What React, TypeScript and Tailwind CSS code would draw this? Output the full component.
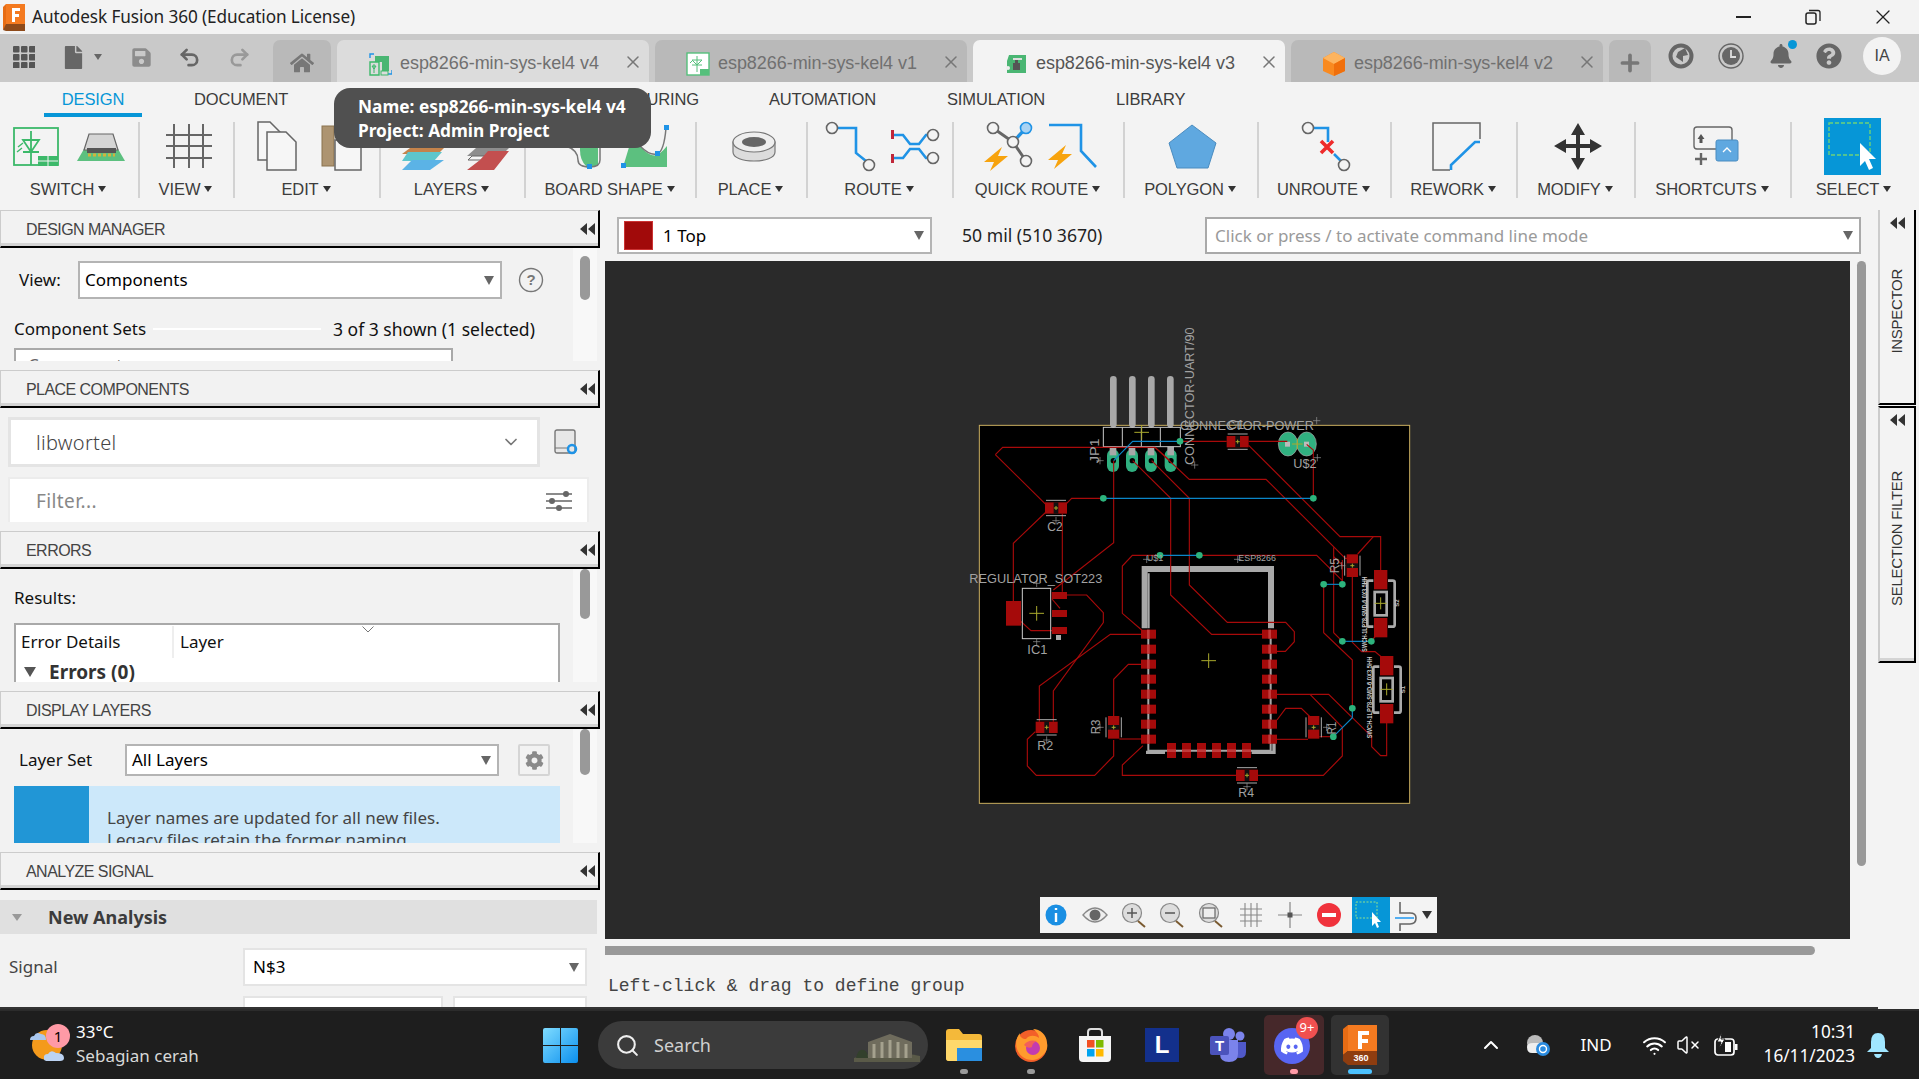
import React from "react";
import { FaDiscord, FaCog, FaHome, FaBell, FaQuestionCircle, FaSave, FaFile } from "react-icons/fa";
import { Undo2, Redo2, Wifi, VolumeX, ChevronUp, ChevronDown, Search, X, Plus } from "lucide-react";

const Caret = ({ c = "border-t-[#333]" }: { c?: string }) => (
  <span className={`inline-block w-0 h-0 ml-[4px] border-l-[4px] border-r-[4px] border-t-[6px] border-l-transparent border-r-transparent ${c}`} />
);
const SelCaret = () => (
  <span className="inline-block w-0 h-0 border-l-[5px] border-r-[5px] border-t-[9px] border-l-transparent border-r-transparent border-t-[#666]" />
);
const Rewind = () => (
  <svg width="15" height="12" viewBox="0 0 15 12"><path d="M7 0v12L0 6zM15 0v12L8 6z" fill="#333" /></svg>
);

const Thumb = ({ h }: { h: string }) => (
  <div className="w-[24px] shrink-0 bg-[#f8f8f8] pl-[7px]">
    <div className={`w-[10px] rounded-[5px] bg-[#999] ${h}`} />
  </div>
);

const PanelHeader = ({ title }: { title: string }) => (
  <div className="h-[38px] shrink-0 w-[600px] flex items-center justify-between bg-[#f2f2f2] border-t border-t-[#ccc] border-l border-l-[#ccc] border-r-2 border-r-black border-b-2 border-b-black shadow-[inset_0_-3px_0_#d4d4d4] pl-[25px] pr-[3px] font-['Liberation_Sans',sans-serif]">
    <span className="text-[16px] tracking-[-0.55px] text-[#444] pt-[2px]">{title}</span>
    <Rewind />
  </div>
);

function Group({ left, w, label, children, sep = true }: { left: number; w: number; label: string; children?: React.ReactNode; sep?: boolean }) {
  return (
    <div className="shrink-0 h-[128px] relative" style={{ width: w }}>
      <svg width={w} height={60} viewBox={`${left} 118 ${w} 60`} className="block mt-[36px]">{children}</svg>
      <div className="h-[20px] mt-[1px] pr-[4px] flex items-center justify-center text-[16.500px] leading-none text-[#3c3c3c] tracking-[-0.1px]">
        {label}<Caret />
      </div>
      {sep && <div className="absolute right-0 top-[40px] h-[76px] w-[2px] bg-[#d2d2d2]" />}
    </div>
  );
}

const Bolt = ({ x, y }: { x: number; y: number }) => (
  <path transform={`translate(${x},${y})`} d="M6 -12 L-12 3 L-2 3 L-6 12 L12 -3 L2 -3 Z" fill="#f7a30d" />
);
const Ring = ({ x, y, r = 5.5, fill = "#f3f3f3", s = "#666" }: { x: number; y: number; r?: number; fill?: string; s?: string }) => (
  <circle cx={x} cy={y} r={r} fill={fill} stroke={s} strokeWidth={1.6} />
);
const Doc = ({ x, y, w, h }: { x: number; y: number; w: number; h: number }) => (
  <path d={`M${x} ${y}H${x + w - 10}L${x + w} ${y + 10}V${y + h}H${x}Z`} fill="#f6f6f6" stroke="#666" strokeWidth={1.5} />
);

function Ribbon() {
  return (
    <div className="flex w-[1919px] h-[128px] shrink-0 bg-[#f3f3f3] overflow-hidden">
      <Group left={0} w={140} label="SWITCH">
        <rect x={14} y={128} width={44} height={37} fill="none" stroke="#3cb96a" strokeWidth={1.8} />
        <path d="M31 131V165M23 140H39L31 152ZM23 152H39" fill="none" stroke="#3cb96a" strokeWidth={1.8} />
        <path d="M18 147l5 -4M17 152l5 -4" stroke="#3cb96a" strokeWidth={1.4} />
        <rect x={38} y={156} width={20} height={10} fill="#3cb96a" />
        <path d="M38 161H58M48 156V166" stroke="#f3f3f3" strokeWidth={1} />
        <path d="M77 161L84 149H118L125 161Z" fill="#5cc07f" />
        <path d="M84 150L89 134H113L118 150Z" fill="#d5d5d5" stroke="#666" strokeWidth={1.2} />
        <rect x={87} y={148} width={29} height={5} fill="#555" />
        <path d="M88 155h27" stroke="#d3b23c" strokeWidth={3} strokeDasharray="3 2" />
      </Group>
      <Group left={140} w={95} label="VIEW">
        <path d="M174 124V168M189 124V168M203 124V168M166 135H212M166 146H212M166 158H212" stroke="#666" strokeWidth={2} fill="none" />
      </Group>
      <Group left={235} w={146} label="EDIT">
        <Doc x={258} y={122} w={22} h={38} />
        <Doc x={267} y={132} w={29} h={38} />
        <rect x={322} y={126} width={12} height={40} fill="#ad9471" stroke="#8a734f" />
        <rect x={335} y={140} width={26} height={30} fill="#f6f6f6" stroke="#666" strokeWidth={1.5} />
      </Group>
      <Group left={381} w={145} label="LAYERS">
        <path d="M410 148H444L438 154H402Z" fill="#c4834b" />
        <path d="M408 152H442L434 161H402Z" fill="#5dc6cc" />
        <path d="M412 160H444L430 170H402Z" fill="#5bb3e6" />
        <path d="M476 148H509L501 156H467Z" fill="#8d8d8d" />
        <path d="M472 156H504L498 160H468Z" fill="#f3f3f3" stroke="#666" />
        <path d="M488 151H509L494 170H467L480 160Z" fill="#c34f4f" />
      </Group>
      <Group left={526} w={171} label="BOARD SHAPE">
        <path d="M580 146H598V166H586Q580 160 580 150Z" fill="#5cc07f" />
        <path d="M566 146Q578 150 578 160Q578 167 590 167" fill="none" stroke="#777" strokeWidth={1.5} />
        <path d="M600 146V160Q600 167 590 167" fill="none" stroke="#777" strokeWidth={1.5} />
        <rect x={587} y={164} width={5} height={5} fill="#1f93e6" />
        <path d="M623 167L630 144L640 146Q650 158 658 155Q664 150 667 146V167Z" fill="#5cc07f" />
        <path d="M666 128Q664 152 657 154Q650 156 640 146" fill="none" stroke="#777" strokeWidth={1.5} />
        <rect x={664} y={125} width={5} height={5} fill="#1f93e6" />
        <rect x={655} y={151} width={5} height={5} fill="#1f93e6" />
        <rect x={621} y={163} width={5} height={5} fill="#1f93e6" />
      </Group>
      <Group left={697} w={111} label="PLACE">
        <path d="M733 142V152C733 158 743 161 754 161S775 158 775 152V142Z" fill="#dcdcdc" stroke="#777" strokeWidth={1.2} />
        <ellipse cx={754} cy={142} rx={21} ry={10} fill="#eee" stroke="#777" strokeWidth={1.2} />
        <ellipse cx={754} cy={142} rx={12} ry={5} fill="#666" />
      </Group>
      <Group left={808} w={146} label="ROUTE">
        <path d="M837 128H856V153L866 161" fill="none" stroke="#1f93e6" strokeWidth={2.6} />
        <Ring x={832} y={128} /><Ring x={869} y={165} />
        <path d="M894 135H903L910 144H919L926 135H932M894 158H903L910 149H919L926 158H932" fill="none" stroke="#1f93e6" strokeWidth={2.6} />
        <path d="M892.500 130V139M892.500 154V163" stroke="#c0273a" strokeWidth={3} />
        <Ring x={933} y={135} /><Ring x={933} y={158} />
      </Group>
      <Group left={954} w={171} label="QUICK ROUTE">
        <path d="M993 128L1013 142L1026 161M1013 142L1026 128" stroke="#666" strokeWidth={3} fill="none" />
        <path d="M1013 142L1026 128" stroke="#1f93e6" strokeWidth={3} fill="none" />
        <Ring x={993} y={128} /><Ring x={1013} y={142} /><Ring x={1026} y={161} />
        <Ring x={1026} y={128} fill="#a9d3f3" s="#1f93e6" />
        <Bolt x={996} y={159} />
        <path d="M1049 125H1081V151L1096 167" fill="none" stroke="#1f93e6" strokeWidth={2.6} />
        <Bolt x={1060} y={157} />
      </Group>
      <Group left={1125} w={134} label="POLYGON">
        <path d="M1192 125L1216 143L1208 168H1177L1169 143Z" fill="#5fa8e0" stroke="#4a8cc0" strokeWidth={1} />
      </Group>
      <Group left={1259} w={133} label="UNROUTE">
        <path d="M1314 128H1328V142M1334 154L1341 161" fill="none" stroke="#1f93e6" strokeWidth={2.6} />
        <Ring x={1308} y={128} /><Ring x={1344} y={165} />
        <path d="M1321 141L1333 153M1333 141L1321 153" stroke="#ee2b2b" strokeWidth={3.6} />
      </Group>
      <Group left={1392} w={126} label="REWORK">
        <path d="M1450 170H1433V123H1480V139" fill="none" stroke="#666" strokeWidth={1.5} />
        <path d="M1451 170V165L1475 142H1480" fill="none" stroke="#1f93e6" strokeWidth={2.6} />
      </Group>
      <Group left={1518} w={118} label="MODIFY">
        <path d="M1578 123L1585 135H1580V144H1590V139L1602 146L1590 153V148H1580V158H1585L1578 170L1571 158H1576V148H1566V153L1554 146L1566 139V144H1576V135H1571Z" fill="#333" />
      </Group>
      <Group left={1636} w={156} label="SHORTCUTS">
        <path d="M1718 149H1697Q1694 149 1694 146V130Q1694 127 1697 127H1729Q1732 127 1732 130V140" fill="none" stroke="#666" strokeWidth={1.4} />
        <path d="M1701 134l3.500 5h-2v4h-3v-4h-2z" fill="#555" />
        <path d="M1695 159H1707M1701 153V165" stroke="#666" strokeWidth={2.4} />
        <rect x={1716} y={140} width={22} height={21} rx={2} fill="#5fa8e0" stroke="#4a8cc0" />
        <path d="M1723 152l4 -4l4 4" fill="none" stroke="#fff" strokeWidth={1.3} />
      </Group>
      <Group left={1792} w={127} label="SELECT" sep={false}>
        <rect x={1824} y={118} width={57} height={57} fill="#0696d7" />
        <rect x={1829} y={123} width={41} height={32} fill="none" stroke="#6fd27a" strokeWidth={1.4} strokeDasharray="4 2" />
        <path d="M1860 143V166L1865 161L1869 170L1873 168L1869 159L1876 159Z" fill="#fff" />
      </Group>
    </div>
  );
}

function TabIcon({ k }: { k: number }) {
  if (k === 0)
    return (
      <svg width="24" height="24" viewBox="0 0 24 24">
        <path d="M2 6V2H6M20 22H24V18" stroke="#1f93e6" strokeWidth="1.4" fill="none" />
        <path d="M7 4H21V19H14V10H7Z" fill="#4ab673" />
        <path d="M2 10H11V23H2Z" fill="none" stroke="#3cb96a" strokeWidth="1.4" />
        <path d="M6 12V21M4 14H8L6 17Z" stroke="#3cb96a" fill="none" />
        <rect x="13" y="19" width="7" height="4" fill="none" stroke="#3cb96a" />
      </svg>
    );
  if (k === 1)
    return (
      <svg width="24" height="24" viewBox="0 0 24 24">
        <rect x="1" y="1" width="22" height="22" fill="#fff" stroke="#56c07c" strokeWidth="1.4" />
        <path d="M11 4V20M6 8H16L11 13ZM6 13H16M4 11l3 -3" stroke="#56c07c" fill="none" />
        <rect x="14" y="17" width="9" height="6" fill="#56c07c" />
      </svg>
    );
  if (k === 2)
    return (
      <svg width="24" height="24" viewBox="0 0 24 24">
        <path d="M5 3H22V21H3V9Z" fill="#4ab673" />
        <rect x="9" y="11" width="7" height="7" fill="#555" />
        <rect x="9" y="6" width="9" height="2" fill="#ddd" />
        <rect x="11" y="8" width="3" height="3" fill="#555" />
        <circle cx="4" cy="16" r="2" fill="#eee" />
      </svg>
    );
  return (
    <svg width="24" height="26" viewBox="0 0 24 26">
      <path d="M12 1L23 7V20L12 25L1 20V7Z" fill="#f98a20" />
      <path d="M1 7L12 13L23 7L12 1Z" fill="#fdb45f" />
      <path d="M12 13V25L23 20V7Z" fill="#f06f0c" />
    </svg>
  );
}

function Tab({ k, label, bg }: { k: number; label: string; bg: string }) {
  const active = k === 2;
  return (
    <div className={`w-[312px] h-[42px] mr-[6px] rounded-t-[7px] ${bg} flex items-center pl-[31px] pt-[5px] shrink-0 text-[18px] tracking-[-0.05px] ${active ? "text-[#555]" : "text-[#707070]"}`}>
      <div className="w-[24px] flex justify-center"><TabIcon k={k} /></div>
      <span className="ml-[8px] w-[224px] whitespace-nowrap">{label}</span>
      <X size={20} strokeWidth={1.8} className="text-[#777] ml-[-1px] mt-[-3px]" />
    </div>
  );
}

function Title() {
  return (
    <div className="h-[34px] w-[1919px] shrink-0 bg-[#f3f3f3] flex items-center">
      <svg width="22" height="27" viewBox="0 0 22 27" className="ml-[3px]">
        <path d="M3 0H22V22H3Z" fill="#f47a20" />
        <path d="M0 3L3 0V22L0 26Z" fill="#e76c14" />
        <path d="M3 20H22V27H3L0 26Z" fill="#8e4a1a" />
        <path d="M9 4H17V7H12V10H16V13H12V18H9Z" fill="#fff" />
      </svg>
      <span className="ml-[7px] text-[17.200px] font-['Noto_Sans',sans-serif] text-[#222] tracking-[-0.1px]">Autodesk Fusion 360 (Education License)</span>
      <div className="flex-1" />
      <div className="w-[15px] h-[1.500px] bg-[#222] mr-[54px]" />
      <svg width="16" height="16" viewBox="0 0 16 16" className="mr-[50px]">
        <rect x="1" y="4" width="10" height="11" rx="2" fill="none" stroke="#222" strokeWidth="1.5" />
        <path d="M4 1.500H13Q15 1.500 15 3.500V12" fill="none" stroke="#222" strokeWidth="1.3" />
      </svg>
      <X size={24} strokeWidth={1.3} className="text-[#222] mr-[24px]" />
    </div>
  );
}

function TabBar() {
  return (
    <div className="h-[48px] w-[1919px] shrink-0 bg-[#c9c9c9] flex items-end">
      <div className="h-[48px] w-[273px] shrink-0 flex items-center pb-[2px]">
        <svg width="22" height="22" viewBox="0 0 22 22" className="ml-[13px]">
          {[0, 8, 16].map((x) => [0, 8, 16].map((y) => <rect key={`${x}${y}`} x={x} y={y} width="6.500" height="6.500" rx="1" fill="#555" />))}
        </svg>
        <FaFile size={23} className="ml-[27px] text-[#666]" />
        <span className="ml-[5px] flex"><Caret c="border-t-[#666]" /></span>
        <FaSave size={21} className="ml-[29px] text-[#8c8c8c]" />
        <Undo2 size={23} strokeWidth={2.8} className="ml-[26px] text-[#666]" />
        <Redo2 size={23} strokeWidth={2.8} className="ml-[27px] text-[#999]" />
      </div>
      <div className="w-[58px] h-[42px] mr-[6px] rounded-t-[7px] bg-[#b9b9b9] flex items-center justify-center shrink-0">
        <FaHome size={24} className="text-[#777] mt-[4px]" />
      </div>
      <Tab k={0} label="esp8266-min-sys-kel4 v4" bg="bg-[#dcdcdc]" />
      <Tab k={1} label="esp8266-min-sys-kel4 v1" bg="bg-[#b9b9b9]" />
      <Tab k={2} label="esp8266-min-sys-kel4 v3" bg="bg-[#f3f3f3]" />
      <Tab k={3} label="esp8266-min-sys-kel4 v2" bg="bg-[#b9b9b9]" />
      <div className="w-[42px] h-[42px] rounded-t-[7px] bg-[#b9b9b9] flex items-center justify-center shrink-0 pt-[3px]">
        <Plus size={26} strokeWidth={3.4} className="text-[#777]" />
      </div>
      <div className="h-[48px] flex items-center pb-[4px] shrink-0">
        <svg width="26" height="26" viewBox="0 0 26 26" className="ml-[17px]">
          <circle cx="13" cy="13" r="10.500" fill="none" stroke="#666" strokeWidth="4" />
          <path d="M10 9L17 5L20 12L15 13L15 19L8 14Z" fill="#666" />
        </svg>
        <svg width="26" height="26" viewBox="0 0 26 26" className="ml-[24px]">
          <circle cx="13" cy="13" r="12" fill="none" stroke="#666" strokeWidth="1.4" />
          <circle cx="13" cy="13" r="9" fill="#666" />
          <path d="M13 7V14H18" stroke="#ddd" strokeWidth="1.800" fill="none" />
        </svg>
        <div className="relative ml-[24px] w-[26px] h-[26px] flex items-center justify-center">
          <FaBell size={24} className="text-[#666]" />
          <div className="absolute right-[-3px] top-[-3px] w-[9px] h-[9px] rounded-full bg-[#0696d7]" />
        </div>
        <FaQuestionCircle size={26} className="ml-[22px] text-[#666]" />
        <div className="ml-[21px] w-[38px] h-[38px] rounded-full bg-[#f3f3f3] flex items-center justify-center text-[16px] text-[#444]">IA</div>
      </div>
    </div>
  );
}

function NavTabs() {
  const item = "shrink-0 text-[16.500px] tracking-[-0.15px] text-[#3c3c3c] pt-[5px]";
  return (
    <div className="absolute left-0 top-[82px] h-[36px] w-[1300px] flex z-10">
      <div className="ml-[44px] w-[98px] h-[35px] border-b-4 border-b-[#0696d7] text-center text-[16.500px] tracking-[-0.15px] text-[#0696d7] pt-[5px] shrink-0">DESIGN</div>
      <div className={`${item} ml-[52px] w-[363px]`}>DOCUMENT</div>
      <div className={`${item} w-[212px]`}>MANUFACTURING</div>
      <div className={`${item} w-[178px]`}>AUTOMATION</div>
      <div className={`${item} w-[169px]`}>SIMULATION</div>
      <div className={`${item} w-[100px]`}>LIBRARY</div>
    </div>
  );
}

function Select({ w, h, label, sw }: { w: string; h: string; label: string; sw?: boolean }) {
  return (
    <div className={`${w} ${h} shrink-0 bg-white border-2 border-[#b4b4b4] flex items-center pr-[6px]`}>
      {sw && <div className="w-[29px] h-[29px] ml-[5px] mr-[10px] bg-[#a10a0a] border border-[#c33]" />}
      <span className={`${sw ? "" : "ml-[5px]"} text-[17px] text-black flex-1 whitespace-nowrap`}>{label}</span>
      <SelCaret />
    </div>
  );
}

function LeftPanel() {
  return (
    <div className="w-[600px] shrink-0 flex flex-col bg-[#f2f2f2] font-['Noto_Sans',sans-serif] text-[17px] overflow-hidden border-b-2 border-b-[#333]">
      <PanelHeader title="DESIGN MANAGER" />
      <div className="h-[113px] flex overflow-hidden shrink-0">
        <div className="w-[573px]">
          <div className="flex items-center mt-[13px]">
            <span className="ml-[19px] w-[59px] text-[#111]">View:</span>
            <Select w="w-[424px]" h="h-[38px]" label="Components" />
            <svg width="26" height="26" viewBox="0 0 26 26" className="ml-[16px]">
              <circle cx="13" cy="13" r="11.500" fill="none" stroke="#777" strokeWidth="1.4" />
              <text x="13" y="18" textAnchor="middle" fontSize="15" fontWeight="700" fill="#777" fontFamily="Liberation Sans">?</text>
            </svg>
          </div>
          <div className="flex items-center h-[24px] mt-[18px] ml-[14px] text-[#111]">
            <span className="w-[139px] whitespace-nowrap">Component Sets</span>
            <div className="w-[168px] h-[2px] bg-white" />
            <span className="ml-[12px] whitespace-nowrap text-[17.500px]">3 of 3 shown (1 selected)</span>
          </div>
          <div className="ml-[14px] mt-[7px] w-[439px] h-[40px] border-2 border-[#a9a9a9] bg-white pl-[12px] pt-[2px] text-[#666]">Component</div>
        </div>
        <Thumb h="h-[44px] mt-[8px]" />
      </div>
      <div className="h-[9px] shrink-0" />
      <PanelHeader title="PLACE COMPONENTS" />
      <div className="h-[114px] shrink-0 overflow-hidden">
        <div className="flex items-center mt-[9px]">
          <div className="ml-[8px] w-[532px] h-[50px] bg-white border-[3px] border-[#e4e4e4] flex items-center pl-[25px] pr-[16px] text-[20px] font-light tracking-[0.3px] text-[#444]">
            <span className="flex-1 pt-[1px]">libwortel</span>
            <ChevronDown size={20} strokeWidth={2} className="text-[#777]" />
          </div>
          <svg width="24" height="26" viewBox="0 0 24 26" className="ml-[14px]">
            <rect x="1" y="1" width="20" height="23" rx="2" fill="#e7e7e7" stroke="#777" strokeWidth="1.4" />
            <path d="M1 19H14" stroke="#777" />
            <circle cx="18" cy="20" r="4" fill="none" stroke="#1f93e6" strokeWidth="2.500" />
          </svg>
        </div>
        <div className="ml-[8px] mt-[10px] w-[581px] h-[46px] bg-white border-2 border-[#ececec] border-b-0 flex items-center pl-[26px] pr-[15px]">
          <span className="flex-1 text-[19px] tracking-[0.4px] text-[#888]">Filter...</span>
          <svg width="26" height="22" viewBox="0 0 26 22">
            <path d="M0 4H26M0 11H26M0 18H26" stroke="#666" strokeWidth="1.4" />
            <circle cx="20" cy="4" r="3" fill="#666" /><circle cx="6" cy="11" r="3" fill="#666" /><circle cx="13" cy="18" r="3" fill="#666" />
          </svg>
        </div>
      </div>
      <div className="h-[9px] shrink-0" />
      <PanelHeader title="ERRORS" />
      <div className="h-[113px] flex overflow-hidden shrink-0">
        <div className="w-[573px]">
          <div className="ml-[14px] mt-[17px] h-[24px] leading-[24px] text-[#111]">Results:</div>
          <div className="ml-[14px] mt-[13px] w-[546px] h-[70px] bg-white border-2 border-[#a9a9a9] relative">
            <div className="flex h-[34px] items-center text-[#111]">
              <div className="w-[158px] pl-[5px] h-[32px] border-r-2 border-r-[#eee] leading-[32px]">Error Details</div>
              <div className="pl-[6px]">Layer</div>
            </div>
            <svg width="12" height="7" viewBox="0 0 12 7" className="absolute left-[346px] top-[1px]"><path d="M0.500 0.500L6 6L11.500 0.500" fill="none" stroke="#777" /></svg>
            <div className="flex items-center h-[24px] mt-[1px]">
              <div className="ml-[8px] w-0 h-0 border-l-[6px] border-r-[6px] border-t-[10px] border-l-transparent border-r-transparent border-t-[#555]" />
              <span className="ml-[13px] font-bold text-[19px] leading-[24px] text-[#333]">Errors (0)</span>
            </div>
          </div>
        </div>
        <Thumb h="h-[50px]" />
      </div>
      <div className="h-[9px] shrink-0" />
      <PanelHeader title="DISPLAY LAYERS" />
      <div className="h-[114px] flex overflow-hidden shrink-0">
        <div className="w-[573px]">
          <div className="flex items-center mt-[15px]">
            <span className="ml-[19px] w-[106px] text-[#111]">Layer Set</span>
            <Select w="w-[374px]" h="h-[32px]" label="All Layers" />
            <div className="ml-[19px] w-[32px] h-[32px] border-2 border-[#d5d5d5] rounded-[2px] flex items-center justify-center">
              <FaCog size={19} className="text-[#8a8a8a]" />
            </div>
          </div>
          <div className="ml-[14px] mt-[10px] w-[546px] h-[57px] bg-[#cce8fa] flex overflow-hidden">
            <div className="w-[75px] bg-[#2196d6]" />
            <div className="ml-[18px] pt-[21px] text-[#444] leading-[22px] whitespace-nowrap">
              Layer names are updated for all new files.<br />Legacy files retain the former naming
            </div>
          </div>
        </div>
        <Thumb h="h-[46px]" />
      </div>
      <div className="h-[9px] shrink-0" />
      <PanelHeader title="ANALYZE SIGNAL" />
      <div className="flex-1 overflow-hidden">
        <div className="mt-[10px] h-[34px] w-[597px] bg-[#e0e0e0] flex items-center">
          <div className="ml-[12px] w-0 h-0 border-l-[5px] border-r-[5px] border-t-[7px] border-l-transparent border-r-transparent border-t-[#999]" />
          <span className="ml-[26px] font-bold text-[18px] text-[#3c3c3c]">New Analysis</span>
        </div>
        <div className="flex items-center mt-[14px]">
          <span className="ml-[9px] w-[234px] text-[#444]">Signal</span>
          <div className="w-[344px] h-[38px] bg-white border-2 border-[#e4e4e4] flex items-center pl-[8px] pr-[6px]">
            <span className="flex-1 text-black">N$3</span><SelCaret />
          </div>
        </div>
        <div className="flex mt-[10px] ml-[243px]">
          <div className="w-[200px] h-[30px] bg-white border-2 border-[#e4e4e4]" />
          <div className="ml-[10px] w-[134px] h-[30px] bg-white border-2 border-[#e4e4e4]" />
        </div>
      </div>
    </div>
  );
}

const Cross = ({ x, y, s = 22 }: { x: number; y: number; s?: number }) => (
  <path d={`M${x - s} ${y}H${x + s}M${x} ${y - s}V${y + s}`} stroke="#a9a92c" strokeWidth={3} />
);
const Mark = ({ x, y }: { x: number; y: number }) => (
  <path d={`M${x - 11} ${y}H${x + 11}M${x} ${y - 11}V${y + 11}`} stroke="#999" strokeWidth={2} />
);
const T = ({ x, y, w, fs = 40, rot, bold, children }: { x: number; y: number; w?: number; fs?: number; rot?: boolean; bold?: boolean; children: string }) => (
  <text x={x} y={y} fontSize={fs} fill={bold ? "#c4c4c4" : "#a2a2a2"} fontWeight={bold ? 700 : 400} fontFamily="Liberation Sans" textLength={w} lengthAdjust="spacingAndGlyphs" transform={rot ? `rotate(-90 ${x} ${y})` : undefined}>
    {children}
  </text>
);
const RED = "#a50a0a";
const SmdH = ({ x, y }: { x: number; y: number }) => (
  <g>
    <rect x={x - 33} y={y - 17} width={66} height={34} fill={RED} />
    <rect x={x - 7} y={y - 17} width={14} height={34} fill="#111" />
    <path d={`M${x - 30} ${y - 23}H${x + 30}M${x - 30} ${y + 23}H${x + 30}`} stroke="#aaa" strokeWidth={3} />
    <Cross x={x} y={y} s={6} />
  </g>
);
const SmdV = ({ x, y }: { x: number; y: number }) => (
  <g>
    <rect x={x - 17} y={y - 34} width={34} height={68} fill={RED} />
    <rect x={x - 17} y={y - 7} width={34} height={14} fill="#111" />
    <path d={`M${x - 23} ${y - 30}V${y + 30}M${x + 23} ${y - 30}V${y + 30}`} stroke="#aaa" strokeWidth={3} />
    <Cross x={x} y={y} s={6} />
  </g>
);
const Switch = ({ cx, y0 }: { cx: number; y0: number }) => (
  <g>
    <path d={`M${cx - 22} ${y0 + 32}H${cx - 36}Q${cx - 40} ${y0 + 32} ${cx - 40} ${y0 + 38}V${y0 + 164}Q${cx - 40} ${y0 + 170} ${cx - 34} ${y0 + 170}H${cx - 22}M${cx + 22} ${y0 + 32}H${cx + 36}Q${cx + 42} ${y0 + 32} ${cx + 42} ${y0 + 38}V${y0 + 164}Q${cx + 42} ${y0 + 170} ${cx + 36} ${y0 + 170}H${cx + 22}`} fill="none" stroke="#aaa" strokeWidth={8} />
    <rect x={cx - 18} y={y0 + 66} width={36} height={70} fill="none" stroke="#aaa" strokeWidth={8} />
    <rect x={cx - 20} y={y0} width={40} height={58} fill={RED} />
    <rect x={cx - 20} y={y0 + 144} width={40} height={58} fill={RED} />
    <Cross x={cx} y={y0 + 100} s={18} />
  </g>
);

function Pcb() {
  const reds = [
    "866,406 1140,680 1262,680 1262,780", "106,434 128,412 585,412 688,508 918,508 1156,745 1176,745", "106,434 258,584",
    "320,580 335,565 430,565", "1060,565 1060,420 1040,403", "258,606 160,700 160,873", "307,611 307,845", "461,452 461,698 280,840",
    "518,452 632,565 632,855 755,973 906,973", "575,452 688,565 688,825 802,937 977,937 1003,965 1003,995 976,1024 950,1024", "630,452 585,412",
    "660,394 800,394", "866,394 982,394", "718,736 1070,736 1147,812 1147,823", "600,736 517,736 487,768 487,910 545,960",
    "321,855 380,855 430,908 430,938 280,1143 280,1235", "238,1235 238,1128 451,973 545,973", "160,935 183,935 213,962 276,962",
    "226,1265 202,1288 202,1368 229,1396 404,1396 461,1338 461,1290", "461,1218 461,1108 505,1063 545,1063", "478,1287 545,1287",
    "951,1230 977,1195 1024,1195 1060,1230", "951,1288 1044,1288", "1078,1280 1120,1280", "1177,1195 1177,1050 1091,968 1091,823",
    "1147,823 1147,750", "951,1153 1106,1153 1235,1280 1235,1310 1262,1337 1280,1337 1280,1237", "1050,1153 1147,1252 1147,1338 1090,1396 893,1396",
    "828,1396 487,1396 487,1365 549,1307", "1121,712 1121,968 1147,994", "1234,994 1245,980", "1177,790 1177,997 1205,1025 1245,1025 1275,1050",
    "1193,732 1240,680", "1121,740 1150,768", "276,867 300,895",
  ];
  const blues = ["461,452 518,394 660,394", "430,565 1060,565", "600,736 718,736", "1091,823 1147,823", "1147,994 1234,994", "1120,1280 1177,1223 1177,1195"];
  const vias = [[660, 394], [430, 565], [1060, 565], [600, 736], [718, 736], [1091, 823], [1147, 823], [1147, 994], [1234, 994], [1177, 1195], [1120, 1280]];
  const ys = [973, 1018, 1063, 1108, 1153, 1198, 1243, 1288];
  const xs = [621, 666, 711, 756, 801, 846];
  return (
    <svg width="1245" height="678" viewBox="-1065 -147 3735 2034" className="block">
      <rect x={58} y={346} width={1291} height={1134} fill="#000" stroke="#c9ae5f" strokeWidth={3} />
      {[450, 507, 564, 621].map((x) => (
        <rect key={x} x={x} y={198} width={20} height={155} rx={10} fill="#a8a8a8" />
      ))}
      {[459, 516, 573, 632].map((x) => (
        <g key={x}>
          <rect x={x - 18} y={418} width={36} height={68} rx={18} fill="#30b080" />
          <rect x={x - 10} y={410} width={20} height={26} fill="#a8a8a8" />
          <circle cx={x + 1} cy={452} r={8} fill="#000" />
        </g>
      ))}
      <rect x={430} y={352} width={231} height={58} fill="none" stroke="#c8c8c8" strokeWidth={3} />
      <path d="M487 352V410M544 352V410M601 352V410" stroke="#c8c8c8" strokeWidth={3} />
      <Cross x={545} y={367} />
      <ellipse cx={984} cy={402} rx={29} ry={36} fill="#30b080" stroke="#aaa" strokeWidth={2} />
      <ellipse cx={1040} cy={402} rx={29} ry={36} fill="#30b080" stroke="#aaa" strokeWidth={2} />
      <rect x={975} y={395} width={15} height={15} fill="#bbb" /><rect x={1032} y={395} width={15} height={15} fill="#bbb" />
      <Cross x={1012} y={402} s={16} />
      <path d="M554 955V777H933V955" fill="none" stroke="#a8a8a8" strokeWidth={18} />
      <path d="M566 955V790M565 960V1322H932V960" fill="none" stroke="#a8a8a8" strokeWidth={6} />
      <path d="M558 1327H615M875 1327H942V1300" fill="none" stroke="#a8a8a8" strokeWidth={10} />
      {reds.map((p, i) => <polyline key={i} points={p} fill="none" stroke="#a80a0a" strokeWidth={3.4} />)}
      {blues.map((p, i) => <polyline key={i} points={p} fill="none" stroke="#0b86c8" strokeWidth={3.4} />)}
      {ys.map((y) => (
        <g key={y}>
          <rect x={543} y={y - 14} width={45} height={27} fill={RED} />
          <rect x={906} y={y - 14} width={45} height={27} fill={RED} />
          <rect x={561} y={y - 14} width={8} height={27} fill="#c23b3b" />
          <rect x={925} y={y - 14} width={8} height={27} fill="#c23b3b" />
        </g>
      ))}
      {xs.map((x) => (
        <g key={x}>
          <rect x={x} y={1299} width={27} height={45} fill={RED} />
          <rect x={x} y={1318} width={27} height={8} fill="#c23b3b" />
        </g>
      ))}
      <Cross x={746} y={1052} />
      <rect x={187} y={835} width={85} height={151} fill="none" stroke="#ccc" strokeWidth={3} />
      <rect x={138} y={873} width={45} height={74} fill={RED} />
      <rect x={275} y={846} width={46} height={21} fill={RED} />
      <rect x={276} y={900} width={45} height={21} fill={RED} />
      <rect x={276} y={951} width={45} height={21} fill={RED} />
      <rect x={288} y={975} width={15} height={15} fill="#aaa" />
      <Cross x={230} y={910} />
      <SmdH x={833} y={395} /><SmdH x={288} y={594} /><SmdH x={260} y={1252} /><SmdH x={861} y={1396} />
      <SmdV x={461} y={1252} /><SmdV x={1061} y={1252} /><SmdV x={1177} y={767} />
      <Switch cx={1262} y0={780} />
      <Switch cx={1280} y0={1038} />
      {vias.map(([x, y]) => <circle key={`${x}${y}`} cx={x} cy={y} r={10} fill="#2db47d" />)}
      <Mark x={1070} y={332} /><Mark x={1072} y={443} /><Mark x={420} y={452} /><Mark x={704} y={465} /><Mark x={833} y={345} /><Mark x={288} y={632} /><Mark x={230} y={820} /><Mark x={230} y={995} /><Mark x={560} y={748} /><Mark x={833} y={748} /><Mark x={260} y={1290} /><Mark x={861} y={1430} /><Mark x={420} y={1252} /><Mark x={1100} y={1252} /><Mark x={1145} y={767} />
      <T x={28} y={820} w={399}>REGULATOR_SOT223</T>
      <T x={202} y={1033} w={60}>IC1</T>
      <T x={262} y={664} w={46}>C2</T>
      <T x={232} y={1321} w={48}>R2</T>
      <T x={835} y={1462} w={47}>R4</T>
      <T x={420} y={1273} w={44} rot>R3</T>
      <T x={1128} y={1273} w={38} rot>R1</T>
      <T x={1138} y={790} w={46} rot>R5</T>
      <T x={416} y={460} w={75} rot>JP1</T>
      <T x={702} y={465} w={413} rot>CONNECTOR-UART/90</T>
      <T x={660} y={360} w={402}>CONNECTOR-POWER</T>
      <T x={803} y={358} w={50}>C1</T>
      <T x={1000} y={473} w={70}>U$2</T>
      <T x={560} y={753} w={50} fs={26}>U$1</T>
      <T x={835} y={752} w={113} fs={26}>ESP8266</T>
      <T x={1221} y={1025} w={225} fs={21} rot bold>SWCH-1LP78-SMD-6.0X3.5HH</T>
      <T x={1235} y={1285} w={245} fs={21} rot bold>SWCH-1LP78-SMD-6.0X3.5HH</T>
      <T x={1316} y={890} w={22} fs={18} rot bold>S2</T>
      <T x={1335} y={1150} w={22} fs={18} rot bold>S1</T>
    </svg>
  );
}

function CanvasTools() {
  return (
    <div className="absolute left-[435px] top-[636px] w-[397px] h-[36px] bg-[#f3f3f3]">
      <svg width="397" height="36" viewBox="1040 897 397 36" className="block">
        <circle cx={1056} cy={915} r={10.500} fill="#1a8fe3" /><path d="M1056 913V922M1056 908V910" stroke="#fff" strokeWidth={2.4} />
        <path d="M1083 915Q1095 901 1107 915Q1095 929 1083 915Z" fill="#eee" stroke="#888" strokeWidth={1.4} /><circle cx={1095} cy={915} r={5.500} fill="#666" />
        {[1132, 1170, 1209].map((x, i) => (
          <g key={x}>
            <circle cx={x} cy={913} r={9.500} fill="#ddd" stroke="#888" strokeWidth={1.2} />
            <path d={`M${x + 6} ${921}L${x + 13} ${927}`} stroke="#7a5a30" strokeWidth={2} />
            {i === 0 && <path d={`M${x - 5} 913H${x + 5}M${x} 908V918`} stroke="#555" strokeWidth={1.5} />}
            {i === 1 && <path d={`M${x - 5} 913H${x + 5}`} stroke="#555" strokeWidth={1.5} />}
            {i === 2 && <rect x={x - 6} y={908} width={12} height={10} fill="#eee" stroke="#666" strokeWidth={1.2} />}
          </g>
        ))}
        <path d="M1245 903V927M1251 903V927M1257 903V927M1240 909H1262M1240 915H1262M1240 921H1262" stroke="#888" strokeWidth={1.1} />
        <path d="M1290 902V928M1278 915H1302" stroke="#888" strokeWidth={1.2} /><rect x={1287.500} y={912.500} width={5} height={5} fill="#555" />
        <circle cx={1329} cy={915} r={12} fill="#f0323c" /><rect x={1322} y={913} width={14} height={4} fill="#fff" />
        <rect x={1352} y={897} width={38} height={36} fill="#0696d7" />
        <rect x={1356} y={902} width={21} height={16} fill="none" stroke="#8fe08f" strokeWidth={1} strokeDasharray="2 1.500" />
        <path d="M1372 912V926L1375 923L1377 928L1379 927L1377 922L1381 922Z" fill="#fff" />
        <path d="M1400 902V913H1410Q1416 913 1416 918Q1416 924 1410 924H1400V931" fill="none" stroke="#666" strokeWidth={1.6} />
        <path d="M1395 918H1414" stroke="#2b9cf0" strokeWidth={1.6} />
        <path d="M1422 911H1432L1427 919Z" fill="#333" />
      </svg>
    </div>
  );
}

function Center() {
  return (
    <div className="w-[1278px] shrink-0 flex flex-col font-['Noto_Sans',sans-serif] text-[17px] border-b-2 border-b-[#333]">
      <div className="h-[51px] shrink-0 flex items-start pt-[7px] pl-[17px]">
        <Select w="w-[315px]" h="h-[37px]" label="1 Top" sw />
        <span className="ml-[30px] w-[243px] mt-[5px] text-[17.600px] text-[#222] whitespace-nowrap">50 mil (510 3670)</span>
        <div className="w-[656px] h-[37px] bg-white border-2 border-[#a9a9a9] flex items-center pl-[8px] pr-[6px]">
          <span className="flex-1 text-[#9a9a9a]">Click or press / to activate command line mode</span>
          <SelCaret />
        </div>
      </div>
      <div className="flex ml-[5px] h-[678px] shrink-0">
        <div className="relative w-[1245px] h-[678px] bg-[#2a2a2a] overflow-hidden">
          <Pcb />
          <CanvasTools />
        </div>
        <div className="ml-[7px] w-[9px] h-[605px] bg-[#999] rounded-[5px]" />
      </div>
      <div className="ml-[5px] mt-[7px] w-[1210px] h-[9px] rounded-r-[5px] bg-[#999] shrink-0" />
      <div className="ml-[8px] mt-[20px] text-[18px] leading-[22px] font-['Liberation_Mono',monospace] text-[#444] whitespace-nowrap">Left-click &amp; drag to define group</div>
    </div>
  );
}

function RightRail() {
  return (
    <div className="w-[41px] shrink-0 flex flex-col font-['Liberation_Sans',sans-serif]">
      <div className="w-[38px] h-[195px] shrink-0 border-l-2 border-l-[#ccc] border-r-2 border-r-black border-b-2 border-b-black flex flex-col items-center pt-[7px]">
        <Rewind />
        <div className="flex-1 w-full flex items-center justify-center pb-[9px]"><span className="[writing-mode:vertical-rl] rotate-180 text-[15px] tracking-[-0.3px] text-[#333]">INSPECTOR</span></div>
      </div>
      <div className="w-[38px] h-[257px] mt-[1px] shrink-0 border-l-2 border-l-[#ccc] border-r-2 border-r-black border-b-2 border-b-black border-t-2 border-t-black shadow-[inset_0_-3px_0_#d4d4d4] flex flex-col items-center pt-[6px]">
        <Rewind />
        <div className="flex-1 w-full flex items-center justify-center pb-[10px]"><span className="[writing-mode:vertical-rl] rotate-180 text-[15px] tracking-[-0.3px] text-[#333] whitespace-nowrap">SELECTION FILTER</span></div>
      </div>
    </div>
  );
}

function TaskCell({ ml, w = "w-[60px]", bg = "", dot, children }: { ml: string; w?: string; bg?: string; dot?: string; children: React.ReactNode }) {
  return (
    <div className={`${ml} ${w} h-[60px] rounded-[5px] ${bg} shrink-0 flex flex-col items-center relative`}>
      <div className="h-[60px] flex items-center justify-center">{children}</div>
      {dot && <div className={`absolute bottom-[1px] h-[5px] rounded-[3px] ${dot}`} />}
    </div>
  );
}

function Taskbar() {
  return (
    <div className="h-[70px] w-[1919px] shrink-0 bg-[#1e1e1e] flex items-center border-t-2 border-t-[#2c2c2c] text-white font-['Noto_Sans',sans-serif]">
      <div className="w-[543px] shrink-0 flex items-center">
        <div className="ml-[29px] w-[36px] h-[40px] relative">
          <svg width="36" height="40" viewBox="0 0 36 40">
            <circle cx="18" cy="20" r="15" fill="#f49a1c" />
            <path d="M1 15Q1 11 5 11Q7 6 12 9Q17 9 17 15Z" fill="#a9c7ee" />
            <path d="M15 34Q14 29 19 29Q22 24 27 28Q35 28 35 33Q35 36 31 36H19Q15 36 15 34Z" fill="#bcd3f3" />
          </svg>
          <div className="absolute left-[17px] top-[-1px] w-[24px] h-[24px] rounded-full bg-[#ff9aa6] flex items-center justify-center text-[15px] text-black">1</div>
        </div>
        <div className="ml-[11px] leading-[24px] text-[17px] mt-[-2px]">
          <div>33°C</div>
          <div className="text-[#d8d8d8]">Sebagian cerah</div>
        </div>
      </div>
      <svg width="35" height="35" viewBox="0 0 35 35" className="shrink-0">
        <defs><linearGradient id="w" x1="0" y1="0" x2="1" y2="1"><stop offset="0" stopColor="#7fdcff" /><stop offset="1" stopColor="#0b8fee" /></linearGradient></defs>
        <path d="M2 0H17V17H0V2Q0 0 2 0ZM18 0H33Q35 0 35 2V17H18ZM0 18H17V35H2Q0 35 0 33ZM18 18H35V33Q35 35 33 35H18Z" fill="url(#w)" />
      </svg>
      <div className="ml-[20px] w-[330px] h-[48px] rounded-[24px] bg-[#3b3b3b] flex items-center shrink-0 overflow-hidden">
        <Search size={25} strokeWidth={2} className="ml-[17px] text-[#eee]" />
        <span className="ml-[14px] text-[18px] text-[#d0d0d0] flex-1">Search</span>
        <svg width="66" height="34" viewBox="0 0 66 34" className="mr-[8px]">
          <path d="M0 30Q30 20 66 28V34H0Z" fill="#5a5a48" />
          <path d="M14 30V14L36 6L58 14V30Z" fill="#6f6c5d" />
          <path d="M20 30V16M28 30V14M36 30V12M44 30V14M52 30V16" stroke="#a5a18e" strokeWidth="3" />
          <path d="M2 30Q4 20 10 22Q14 24 14 30Z" fill="#33402c" />
        </svg>
      </div>
      <TaskCell ml="ml-[6px]" dot="w-[8px] bg-[#9a9a9a]">
        <svg width="38" height="34" viewBox="0 0 38 34">
          <path d="M1 4Q1 1 4 1H14L18 6H34Q37 6 37 9V30Q37 33 34 33H4Q1 33 1 30Z" fill="#f4b93a" />
          <path d="M1 12H37V30Q37 33 34 33H4Q1 33 1 30Z" fill="#ffd86b" />
          <rect x="12" y="20" width="25" height="13" fill="#2a8fe0" />
        </svg>
      </TaskCell>
      <TaskCell ml="ml-[7px]" dot="w-[8px] bg-[#9a9a9a]">
        <svg width="36" height="36" viewBox="0 0 36 36">
          <circle cx="18" cy="19" r="16" fill="#f35f29" />
          <path d="M34 16C34 8 27 2 20 2C24 5 26 8 26 11C22 8 16 8 13 12C9 12 6 9 7 6C2 12 2 20 6 26C10 33 22 36 29 29C34 25 35 20 34 16Z" fill="#ff9b2d" />
          <circle cx="20" cy="21" r="7" fill="#c33bb0" />
          <path d="M11 18Q15 12 24 14Q19 16 19 20Q15 22 11 18Z" fill="#f35f5a" />
        </svg>
      </TaskCell>
      <TaskCell ml="ml-[4px]">
        <svg width="36" height="36" viewBox="0 0 36 36">
          <path d="M2 9H34V31Q34 35 30 35H6Q2 35 2 31Z" fill="#f5f5f5" />
          <path d="M11 9V5Q11 2 14 2H22Q25 2 25 5V9" fill="none" stroke="#ddd" strokeWidth="2" />
          <rect x="10" y="13" width="7.500" height="7.500" fill="#f25022" /><rect x="19" y="13" width="7.500" height="7.500" fill="#7fba00" />
          <rect x="10" y="22" width="7.500" height="7.500" fill="#00a4ef" /><rect x="19" y="22" width="7.500" height="7.500" fill="#ffb900" />
        </svg>
      </TaskCell>
      <TaskCell ml="ml-[7px]">
        <div className="w-[34px] h-[34px] bg-[#13308c] flex items-center justify-center text-[24px] font-bold font-['Liberation_Sans',sans-serif]">L</div>
      </TaskCell>
      <TaskCell ml="ml-[6px]">
        <svg width="38" height="36" viewBox="0 0 38 36">
          <circle cx="31" cy="9" r="4.500" fill="#7b83eb" />
          <path d="M25 15H37V25Q37 31 31 31Q25 31 25 25Z" fill="#5059c9" />
          <circle cx="20" cy="7" r="6" fill="#7b83eb" />
          <path d="M11 13H29V27Q29 35 20 35Q11 35 11 27Z" fill="#7b83eb" />
          <rect x="1" y="9" width="19" height="19" rx="2" fill="#4b53bc" />
          <text x="10.500" y="24" textAnchor="middle" fontSize="15" fontWeight="700" fill="#fff" fontFamily="Liberation Sans">T</text>
        </svg>
      </TaskCell>
      <TaskCell ml="ml-[6px]" bg="bg-[#46282a]" dot="w-[8px] bg-[#ff9aa6]">
        <div className="w-[36px] h-[36px] rounded-full bg-[#5865f2] flex items-center justify-center relative mt-[2px] ml-[-4px]">
          <FaDiscord size={24} className="text-white" />
          <div className="absolute left-[22px] top-[-11px] w-[22px] h-[22px] rounded-full bg-[#f05050] flex items-center justify-center text-[13px] text-white">9+</div>
        </div>
      </TaskCell>
      <TaskCell ml="ml-[7px]" w="w-[58px]" bg="bg-[#323232]" dot="w-[24px] bg-[#4cc2ff]">
        <svg width="34" height="40" viewBox="0 0 34 40">
          <path d="M5 0H34V26H5Z" fill="#f47a20" />
          <path d="M0 4L5 0V26L0 30Z" fill="#e76c14" />
          <path d="M5 26H34V40H5L0 36V30Z" fill="#8e3d10" />
          <path d="M15 6H26V10H19V14H25V18H19V24H15Z" fill="#fff" />
          <text x="18" y="36" textAnchor="middle" fontSize="9" fontWeight="700" fill="#fff" fontFamily="Liberation Sans">360</text>
        </svg>
      </TaskCell>
      <div className="ml-[90px] w-[24px] flex justify-center shrink-0"><ChevronUp size={24} strokeWidth={2} /></div>
      <svg width="26" height="24" viewBox="0 0 26 24" className="ml-[22px] shrink-0">
        <circle cx="10" cy="10" r="8" fill="#bbb" /><path d="M2 14Q2 10 8 10H14V20H7Q2 20 2 14Z" fill="#eee" />
        <circle cx="18" cy="16" r="7" fill="#2b8ce0" /><circle cx="18" cy="16" r="3.500" fill="none" stroke="#fff" strokeWidth="1.400" />
      </svg>
      <div className="ml-[26px] w-[38px] text-[17px] text-center shrink-0">IND</div>
      <Wifi size={25} strokeWidth={2} className="ml-[27px] shrink-0" />
      <VolumeX size={24} strokeWidth={1.5} className="ml-[9px] shrink-0" />
      <svg width="26" height="28" viewBox="0 0 26 28" className="ml-[13px] shrink-0">
        <rect x="2" y="8" width="19" height="16" rx="3" fill="none" stroke="#fff" strokeWidth="1.700" />
        <rect x="22" y="13" width="2.500" height="6" fill="#fff" />
        <rect x="12" y="11" width="6" height="10" fill="#fff" />
        <path d="M9 1L4 11H8L6 18L12 8H8Z" fill="#fff" stroke="#1e1e1e" strokeWidth="1" />
      </svg>
      <div className="w-[116px] shrink-0 text-right leading-[24px] text-[17.200px] mt-[-2px]">
        <div>10:31</div>
        <div>16/11/2023</div>
      </div>
      <svg width="24" height="26" viewBox="0 0 24 26" className="ml-[11px] shrink-0">
        <path d="M12 1Q19 1 19 10V16L23 20H1L5 16V10Q5 1 12 1Z" fill="#a0e6ff" />
        <path d="M8 22H16Q15 26 12 26Q9 26 8 22Z" fill="#a0e6ff" />
      </svg>
    </div>
  );
}

export default function App() {
  return (
    <div className="relative w-[1919px] h-[1079px] flex flex-col overflow-hidden bg-[#f3f3f3] font-['Liberation_Sans',Arial,sans-serif]">
      <Title />
      <TabBar />
      <Ribbon />
      <NavTabs />
      <div className="flex h-[799px] shrink-0">
        <LeftPanel />
        <Center />
        <RightRail />
      </div>
      <Taskbar />
      <div className="absolute left-[334px] top-[88px] w-[317px] h-[60px] rounded-[16px] bg-[#505050] text-white font-['Noto_Sans',sans-serif] font-bold text-[17.300px] leading-[24px] pl-[24px] pt-[7px] z-20 whitespace-nowrap">
        <div>Name: esp8266-min-sys-kel4 v4</div>
        <div>Project: Admin Project</div>
      </div>
    </div>
  );
}
